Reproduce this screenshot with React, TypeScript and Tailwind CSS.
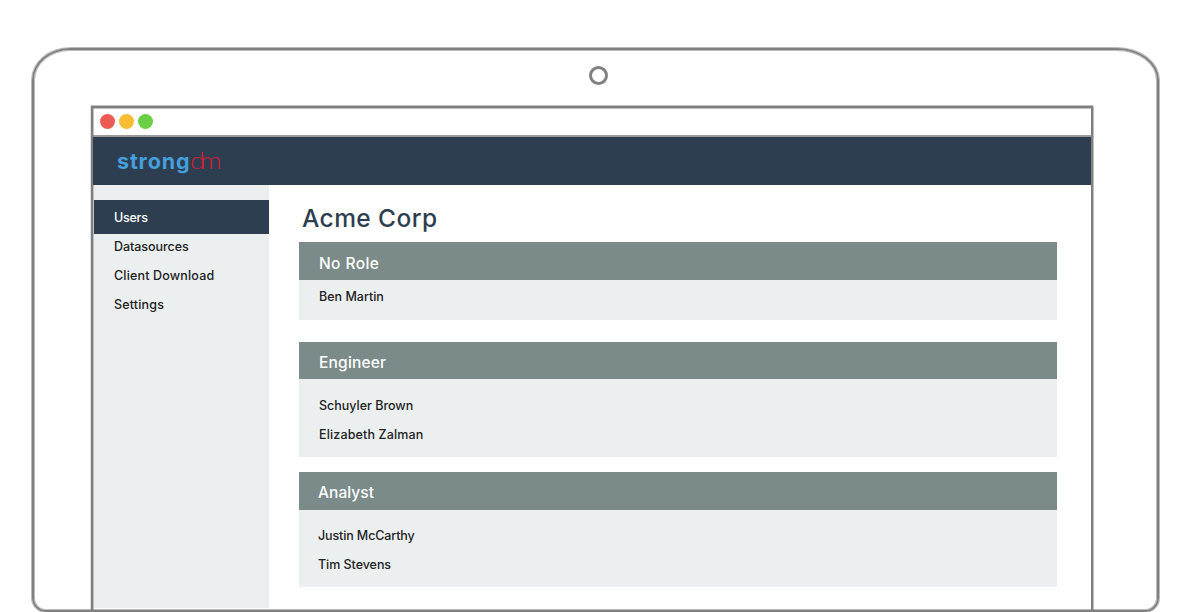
const navItems = [
  { label: "Users", row: "h-[34px] bg-[#2d3e50] text-white pt-[2px]", spacing: "tracking-[-0.25px]" },
  { label: "Datasources", row: "h-[27px] text-[#222]", spacing: "tracking-[-0.05px]" },
  { label: "Client Download", row: "h-[30px] text-[#222]", spacing: "tracking-[0.17px]" },
  { label: "Settings", row: "h-[28px] text-[#222]", spacing: "tracking-[0.17px]" },
];

const roles = [
  {
    name: "No Role",
    users: [{ name: "Ben Martin", spacing: "tracking-[0px]" }],
    box: "mb-[22px]",
    head: "pl-[20px] h-[38px] pt-[2px] tracking-[0.4px]",
    body: "h-[40px] pt-[2px] pl-[20px]",
  },
  {
    name: "Engineer",
    users: [
      { name: "Schuyler Brown", spacing: "tracking-[0px]" },
      { name: "Elizabeth Zalman", spacing: "tracking-[0.15px]" },
    ],
    box: "mb-[15px]",
    head: "pl-[20px] h-[37px] pt-[1px] tracking-[0.2px]",
    body: "h-[78px] pt-[12px] pl-[20px]",
  },
  {
    name: "Analyst",
    users: [
      { name: "Justin McCarthy", spacing: "tracking-[-0.12px]" },
      { name: "Tim Stevens", spacing: "tracking-[-0.05px]" },
    ],
    box: "",
    head: "pl-[19px] h-[38px] pt-[1px] tracking-[0.05px]",
    body: "h-[77px] pt-[11px] pl-[19px]",
  },
];

function Logo() {
  return (
    <div className="flex items-baseline pb-[2px] leading-[26px]">
      <span className="text-[21.5px] font-bold tracking-[0.85px] text-[#459fdb]">strong</span>
      <span className="inline-block origin-left scale-x-[1.12] font-[Lato] text-[24px] font-light tracking-[-4.2px] text-[#d11f3a]">
        dm
      </span>
    </div>
  );
}

export default function App() {
  return (
    <div className="flex h-[612px] w-[1200px] overflow-hidden bg-white pt-[48px] pl-[32px] font-[Inter,sans-serif]">
      <div className="flex h-[564px] w-[1127px] flex-col rounded-tl-[38px_32px] rounded-tr-[42px_32px] rounded-b-[14px] border-2 border-[#808080] shadow-[0_0_0_1px_#80808088,inset_0_0_0_1px_#80808088]">
        <div className="flex h-[56px] justify-center pt-[16px] pl-[6px]">
          <div className="size-[19px] rounded-full border-[3px] border-[#808080]" />
        </div>
        <div className="ml-[57px] flex h-[504px] w-[1002px] flex-col border-2 border-b-0 border-[#808080] shadow-[0_-1px_0_0_#80808080,inset_0_1px_0_0_#80808080,1px_0_0_0_#80808080,-1px_0_0_0_#80808040,inset_1px_0_0_0_#80808080]">
          <div className="flex h-[29px] items-center gap-[4px] border-b-2 border-[#808080]/80 pl-[7px]">
            <div className="size-[15px] rounded-full bg-[#ec5a53]" />
            <div className="size-[15px] rounded-full bg-[#f9bd33]" />
            <div className="size-[15px] rounded-full bg-[#6acf44]" />
          </div>
          <header className="flex h-[48px] items-center bg-[#2d3e50] pl-[24px]">
            <Logo />
          </header>
          <div className="flex">
            <nav className="ml-[1px] h-[423px] w-[175px] bg-[#ebeff0] pt-[15px] text-[12.5px] font-medium">
              {navItems.map((item) => (
                <div key={item.label} className={`flex items-center pl-[20px] ${item.row} ${item.spacing}`}>
                  {item.label}
                </div>
              ))}
            </nav>
            <main className="ml-[30px] w-[758px] pt-[15px]">
              <h1 className="h-[42px] pl-[3px] text-[24.5px] leading-[36px] font-medium tracking-[0.42px] text-[#2d3e50]">
                Acme Corp
              </h1>
              {roles.map((role) => (
                <section key={role.name} className={role.box}>
                  <h2 className={`bg-[#7b8b89] text-[15.5px] leading-[40px] font-medium text-white ${role.head}`}>
                    {role.name}
                  </h2>
                  <ul className={`bg-[#ebeff0] text-[12.5px] leading-[29px] font-medium text-[#222] ${role.body}`}>
                    {role.users.map((user) => (
                      <li key={user.name} className={user.spacing}>
                        {user.name}
                      </li>
                    ))}
                  </ul>
                </section>
              ))}
            </main>
          </div>
        </div>
      </div>
    </div>
  );
}
